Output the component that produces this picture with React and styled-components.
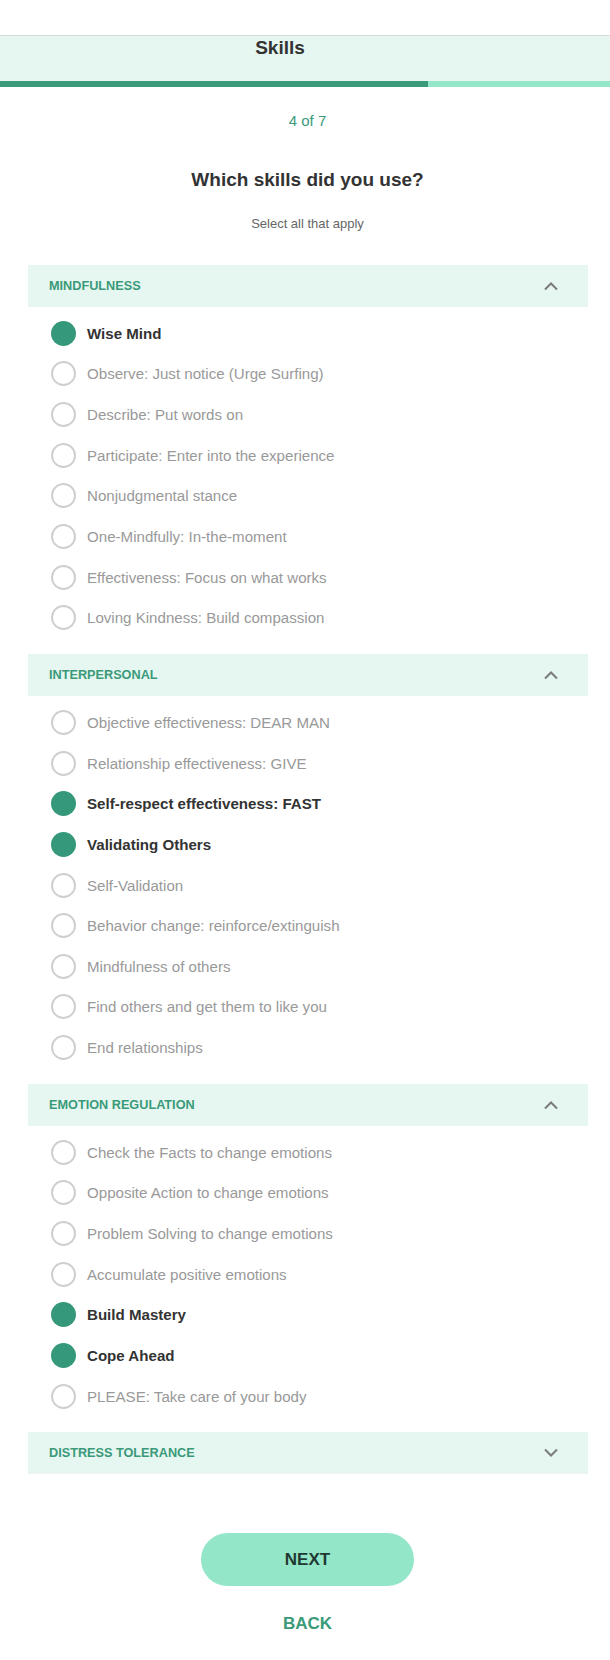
import { useState } from "react";
import styled, { createGlobalStyle } from "styled-components";

const GlobalStyle = createGlobalStyle`
  body {
    margin: 0;
    background: #fff;
    overflow-x: hidden;
    font-family: "Liberation Sans", Arial, sans-serif;
  }
`;

const Page = styled.div`
  width: 615px;
  padding-top: 35px;
  padding-bottom: 28px;
`;

const TopBar = styled.header`
  border-top: 1px solid #d3dcd8;
  background: #e6f7f1;
`;

const TopTitle = styled.h1`
  margin: 0;
  height: 44px;
  padding: 1px 55px 0 0;
  text-align: center;
  font-size: 19px;
  font-weight: bold;
  color: #333;
  line-height: 22px;
`;

const Progress = styled.div`
  height: 6px;
  background: #94e6c8;
  & > div {
    height: 100%;
    background: #3a9a7a;
  }
`;

const Step = styled.div`
  margin-top: 25px;
  text-align: center;
  font-size: 15px;
  color: #3a9a7a;
`;

const Question = styled.h2`
  margin: 40px 0 0;
  text-align: center;
  font-size: 19px;
  font-weight: bold;
  color: #333;
`;

const Hint = styled.p`
  margin: 25px 0 0;
  text-align: center;
  font-size: 13px;
  color: #666;
`;

const Sections = styled.div`
  margin: 34px 27px 0 27.5px;
`;

const SectionHeader = styled.button`
  display: flex;
  align-items: center;
  justify-content: space-between;
  width: 100%;
  height: 42px;
  padding: 0 29px 0 21.5px;
  border: none;
  background: #e6f7f1;
  font-family: inherit;
  font-size: 12.7px;
  font-weight: bold;
  color: #3a9a7a;
  text-transform: uppercase;
  cursor: pointer;
  border-bottom: ${(p) => (p.$last ? "1px solid #f1f4f3" : "none")};
`;

const List = styled.ul`
  list-style: none;
  margin: 0;
  padding: 6px 0 16px;
`;

const Item = styled.li`
  display: flex;
  align-items: center;
  gap: 11px;
  height: 40.65px;
  padding-left: 23.5px;
  font-size: 15.1px;
  font-weight: ${(p) => (p.$on ? "bold" : "normal")};
  color: ${(p) => (p.$on ? "#333" : "#999")};
  cursor: pointer;
`;

const Radio = styled.span`
  box-sizing: border-box;
  width: 25px;
  height: 25px;
  border-radius: 50%;
  flex-shrink: 0;
  background: ${(p) => (p.$on ? "#35987a" : "#fff")};
  border: ${(p) => (p.$on ? "none" : "2px solid #cfcfcf")};
`;

const Footer = styled.div`
  display: flex;
  flex-direction: column;
  align-items: center;
  margin-top: 59px;
`;

const NextButton = styled.button`
  width: 213px;
  height: 53px;
  border: none;
  border-radius: 27px;
  background: #94e6c8;
  font-family: inherit;
  font-size: 17px;
  font-weight: bold;
  color: #1f3a32;
  cursor: pointer;
`;

const BackButton = styled.button`
  margin-top: 27px;
  border: none;
  background: none;
  font-family: inherit;
  font-size: 17px;
  font-weight: bold;
  color: #3a9a7a;
  cursor: pointer;
`;

const Chevron = ({ up }) => (
  <svg width="16" height="10" viewBox="0 0 16 10" fill="none">
    <path
      d={up ? "M2 8.5 L8 2.5 L14 8.5" : "M2 1.5 L8 7.5 L14 1.5"}
      stroke="#7a7a7a"
      strokeWidth="2"
    />
  </svg>
);

const sections = [
  {
    title: "Mindfulness",
    open: true,
    items: [
      "Wise Mind",
      "Observe: Just notice (Urge Surfing)",
      "Describe: Put words on",
      "Participate: Enter into the experience",
      "Nonjudgmental stance",
      "One-Mindfully: In-the-moment",
      "Effectiveness: Focus on what works",
      "Loving Kindness: Build compassion",
    ],
  },
  {
    title: "Interpersonal",
    open: true,
    items: [
      "Objective effectiveness: DEAR MAN",
      "Relationship effectiveness: GIVE",
      "Self-respect effectiveness: FAST",
      "Validating Others",
      "Self-Validation",
      "Behavior change: reinforce/extinguish",
      "Mindfulness of others",
      "Find others and get them to like you",
      "End relationships",
    ],
  },
  {
    title: "Emotion Regulation",
    open: true,
    items: [
      "Check the Facts to change emotions",
      "Opposite Action to change emotions",
      "Problem Solving to change emotions",
      "Accumulate positive emotions",
      "Build Mastery",
      "Cope Ahead",
      "PLEASE: Take care of your body",
    ],
  },
  { title: "Distress Tolerance", open: false, items: [] },
];

export default function App() {
  const [selected, setSelected] = useState([
    "Wise Mind",
    "Self-respect effectiveness: FAST",
    "Validating Others",
    "Build Mastery",
    "Cope Ahead",
  ]);
  const [open, setOpen] = useState(sections.map((s) => s.open));

  const toggle = (name) =>
    setSelected((prev) =>
      prev.includes(name) ? prev.filter((n) => n !== name) : [...prev, name]
    );

  return (
    <Page>
      <GlobalStyle />
      <TopBar>
        <TopTitle>Skills</TopTitle>
        <Progress>
          <div style={{ width: "69.6%" }} />
        </Progress>
      </TopBar>
      <Step>4 of 7</Step>
      <Question>Which skills did you use?</Question>
      <Hint>Select all that apply</Hint>
      <Sections>
        {sections.map((s, i) => (
          <section key={s.title}>
            <SectionHeader
              $last={i === sections.length - 1}
              onClick={() =>
                setOpen((prev) => prev.map((v, j) => (j === i ? !v : v)))
              }
            >
              {s.title}
              <Chevron up={open[i]} />
            </SectionHeader>
            {open[i] && s.items.length > 0 && (
              <List>
                {s.items.map((name) => {
                  const on = selected.includes(name);
                  return (
                    <Item key={name} $on={on} onClick={() => toggle(name)}>
                      <Radio $on={on} />
                      {name}
                    </Item>
                  );
                })}
              </List>
            )}
          </section>
        ))}
      </Sections>
      <Footer>
        <NextButton>NEXT</NextButton>
        <BackButton>BACK</BackButton>
      </Footer>
    </Page>
  );
}
